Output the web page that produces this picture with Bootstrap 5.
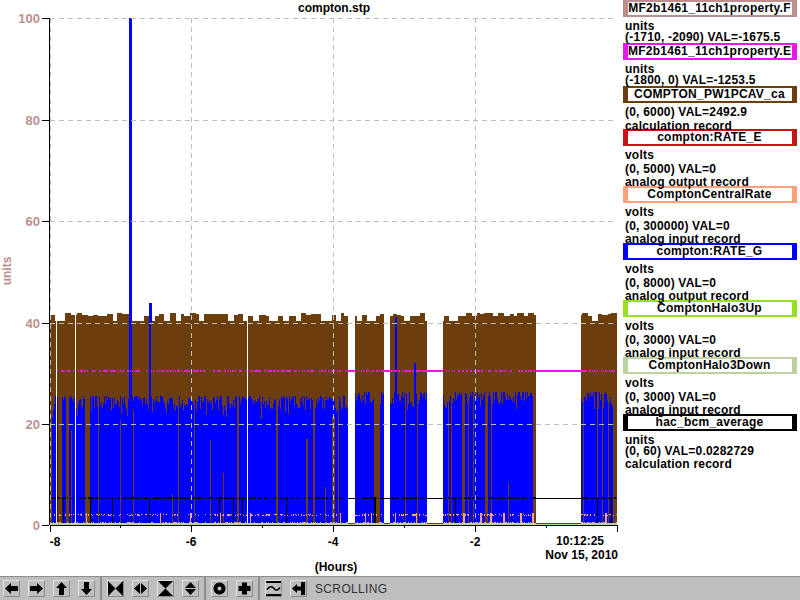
<!DOCTYPE html>
<html lang="en">
<head>
<meta charset="utf-8">
<title>compton.stp</title>
<link href="https://cdn.jsdelivr.net/npm/bootstrap@5.3.0/dist/css/bootstrap.min.css" rel="stylesheet">
<style>
html,body{height:600px;overflow:hidden;background:#fff}
body{font:bold 12px/14px "Liberation Sans",Arial,sans-serif;color:#000}
.strip-main{height:576px}
.plot-svg{width:620px;height:576px;display:block;flex:none}
.plot-svg text{font:bold 12px "Liberation Sans",Arial,sans-serif;fill:#000}
.plot-svg text.rosy{fill:#bc8f8f;font-size:13px}
.legend-pane{width:180px;flex:none;padding:0 3px 0 3px}
.lg-item{height:57px}
.lg-item.short{height:43px}
.lg-name{height:17px;border-style:solid;border-width:2px 5px;line-height:13px;text-align:center;white-space:nowrap;letter-spacing:.25px;padding-right:1px}
.lg-line{padding-left:2px;height:13.5px;line-height:14px;white-space:nowrap;letter-spacing:.2px}
.lg-line.tight{height:10.5px}
.lg-first{margin-top:2px}
.tool-strip{height:24px;background:#bebebe;border-top:1px solid #8e8e8e;font:12px/14px "Liberation Sans",Arial,sans-serif;color:#333}
.tool-btn{width:17px;height:17px;padding:0;margin-right:8px;background:#bebebe;border:1px solid;border-color:#e2e2e2 #8a8a8a #8a8a8a #e2e2e2;border-radius:0;display:flex;align-items:center;justify-content:center;flex:none}
.tool-btn svg{width:15px;height:15px;display:block}
.tool-group{padding:0 0 0 3px;height:100%;border-right:2px solid #8e8e8e;display:flex;align-items:center;width:104px;flex:none}
.tool-group.g1{width:102px}
.tool-group.g2{width:104px;padding-left:5px}
.tool-group.g3{width:54px;padding-left:5px}
.tool-group.g4{padding-left:5px;border:0;width:auto}
.tool-btn.last{margin-right:7px}
.mode-label{letter-spacing:.35px;margin-left:0}
.bl{fill:#000}
</style>
</head>
<body>
<div class="d-flex strip-main">
<svg class="plot-svg" id="plot" viewBox="0 0 620 576" shape-rendering="crispEdges">
<text x="334" y="12" text-anchor="middle">compton.stp</text>
<g id="data"></g>
<g stroke="#bebebe" stroke-width="1" stroke-dasharray="5 4" fill="none">
<path d="M50 18.5H617M50 120.5H617M50 221.5H617M50 323.5H617M50 424.5H617"/>
<path d="M50.5 18V525M191.5 18V525M333.5 18V525M475.5 18V525"/>
</g>
<g stroke="#000" fill="none">
<path d="M49.5 18V525"/>
<path d="M42 18.5H49M42 120.5H49M42 221.5H49M42 323.5H49M42 424.5H49M42 525.5H49"/>
<path d="M50 525.5H618M50.5 525V532M120.5 525V528M191.5 525V532M262.5 525V528M333.5 525V532M404.5 525V528M475.5 525V532M546.5 525V528M617.5 525V532"/>
</g>
<g text-anchor="end" class="ylab">
<text class="rosy" x="40" y="23">100</text>
<text class="rosy" x="40" y="125">80</text>
<text class="rosy" x="40" y="226">60</text>
<text class="rosy" x="40" y="328">40</text>
<text class="rosy" x="40" y="429">20</text>
<text class="rosy" x="40" y="530">0</text>
</g>
<text class="rosy" transform="translate(11 271) rotate(-90)" text-anchor="middle" style="font-size:12px">units</text>
<g text-anchor="middle">
<text x="55" y="546">-8</text>
<text x="191" y="546">-6</text>
<text x="333" y="546">-4</text>
<text x="475" y="546">-2</text>
<text x="336" y="571">(Hours)</text>
</g>
<g text-anchor="end">
<text x="604" y="545">10:12:25</text>
<text x="618" y="559">Nov 15, 2010</text>
</g>
</svg>
<div class="legend-pane" id="legend">
<div class="lg-item short"><div class="lg-name" style="border-color:#bc8f8f">MF2b1461_11ch1property.F</div><div class="lg-line tight lg-first">units</div><div class="lg-line">(-1710, -2090) VAL=-1675.5</div></div>
<div class="lg-item short"><div class="lg-name" style="border-color:#e619e6">MF2b1461_11ch1property.E</div><div class="lg-line tight lg-first">units</div><div class="lg-line">(-1800, 0) VAL=-1253.5</div></div>
<div class="lg-item short"><div class="lg-name" style="border-color:#6b3e0c">COMPTON_PW1PCAV_ca</div><div class="lg-line lg-first">(0, 6000) VAL=2492.9</div><div class="lg-line">calculation record</div></div>
<div class="lg-item"><div class="lg-name" style="border-color:#c81414">compton:RATE_E</div><div class="lg-line lg-first">volts</div><div class="lg-line">(0, 5000) VAL=0</div><div class="lg-line">analog output record</div></div>
<div class="lg-item"><div class="lg-name" style="border-color:#ffa07a">ComptonCentralRate</div><div class="lg-line lg-first">volts</div><div class="lg-line">(0, 300000) VAL=0</div><div class="lg-line">analog input record</div></div>
<div class="lg-item"><div class="lg-name" style="border-color:#0000ff">compton:RATE_G</div><div class="lg-line lg-first">volts</div><div class="lg-line">(0, 8000) VAL=0</div><div class="lg-line">analog output record</div></div>
<div class="lg-item"><div class="lg-name" style="border-color:#98e01a">ComptonHalo3Up</div><div class="lg-line lg-first">volts</div><div class="lg-line">(0, 3000) VAL=0</div><div class="lg-line">analog input record</div></div>
<div class="lg-item"><div class="lg-name" style="border-color:#bcd3a0">ComptonHalo3Down</div><div class="lg-line lg-first">volts</div><div class="lg-line">(0, 3000) VAL=0</div><div class="lg-line">analog input record</div></div>
<div class="lg-item"><div class="lg-name" style="border-color:#000">hac_bcm_average</div><div class="lg-line tight lg-first">units</div><div class="lg-line">(0, 60) VAL=0.0282729</div><div class="lg-line">calculation record</div></div>
</div>
</div>
<div class="tool-strip d-flex align-items-center">
<div class="tool-group g1">
<button class="tool-btn btn" type="button" aria-label="left"><svg viewBox="0 0 15 15"><path class="bl" d="M1 7.5 7 2V5H14V10H7V13Z"/></svg></button>
<button class="tool-btn btn" type="button" aria-label="right"><svg viewBox="0 0 15 15"><path class="bl" d="M14 7.5 8 2V5H1V10H8V13Z"/></svg></button>
<button class="tool-btn btn" type="button" aria-label="up"><svg viewBox="0 0 15 15"><path class="bl" d="M7.5 1 13 7H10V14H5V7H2Z"/></svg></button>
<button class="tool-btn btn" type="button" aria-label="down"><svg viewBox="0 0 15 15"><path class="bl" d="M7.5 14 13 8H10V1H5V8H2Z"/></svg></button>
</div>
<div class="tool-group g2">
<button class="tool-btn btn" type="button" aria-label="zoom in x"><svg viewBox="0 0 15 15"><path class="bl" d="M0 0 7.5 7.5 15 0V15L7.5 7.5 0 15Z"/></svg></button>
<button class="tool-btn btn" type="button" aria-label="zoom out x"><svg viewBox="0 0 15 15"><path class="bl" d="M7 2V13L1 7.5ZM8 2V13L14 7.5Z"/></svg></button>
<button class="tool-btn btn" type="button" aria-label="zoom in y"><svg viewBox="0 0 15 15"><path class="bl" d="M0 0H15L7.5 7.5 15 15H0L7.5 7.5Z"/></svg></button>
<button class="tool-btn btn" type="button" aria-label="zoom out y"><svg viewBox="0 0 15 15"><path class="bl" d="M2 7 7.5 1 13 7ZM2 8 7.5 14 13 8Z"/></svg></button>
</div>
<div class="tool-group g3">
<button class="tool-btn btn" type="button" aria-label="autoscale"><svg viewBox="0 0 15 15"><path class="bl" fill-rule="evenodd" d="M7.5 1.5a6 6 0 1 0 .01 0ZM7.5 5.5a2 2 0 1 1-.01 0Z"/></svg></button>
<button class="tool-btn btn last" type="button" aria-label="reset"><svg viewBox="0 0 15 15"><path class="bl" d="M5 1.5H10V5H13.5V10H10V13.5H5V10H1.5V5H5Z"/></svg></button>
</div>
<div class="tool-group g4">
<button class="tool-btn btn" type="button" aria-label="graph"><svg viewBox="0 0 15 15"><path class="bl" d="M0 0H15V2H0ZM0 13H15V15H0Z"/><path d="M1 8.5C4 5 6 5 8 7.5S12 9.5 14 6.5" fill="none" stroke="#000" stroke-width="1.4" shape-rendering="auto"/></svg></button>
<button class="tool-btn btn" type="button" aria-label="back"><svg viewBox="0 0 15 15"><path class="bl" d="M1 7.5 6 3V5.5H10V1H14V14H10V9.5H6V12Z"/></svg></button>
<span class="mode-label">SCROLLING</span>
</div>
</div>
<script>
(function(){
var s=12345;function r(){s=(s*1103515245+12345)&0x7fffffff;return s/0x7fffffff;}
var segs=[[50,348],[355,384],[390,427],[443,536],[581,617]];
var brown='',blue='',orange='',black='',mag='',pale='';
function col(x,y1,y2){return 'M'+x+' '+y1+'V'+y2;}
var bspk={58:1,59:1,60:1,61:1,66:1,67:1,68:1,71:1,85:1,86:1,87:1,88:1,89:1,98:1,120:1,133:1,172:1,178:1,194:1,210:1,223:1,237:1,238:1,276:1,277:1,306:1,307:1,313:1,314:1,325:1,332:1,333:1,334:1,338:1,374:1,375:1,376:1,377:1,378:1,379:1,384:1,405:1,417:1,448:1,451:1,462:1,463:1,464:1,468:1,473:1,485:1,486:1,487:1,491:1,508:1,533:1,534:1,535:1,583:1,597:1,602:1,608:1,613:1,614:1,615:1,616:1};
var btop={172:494,210:440,223:473,306:439,307:439,325:487,332:417,333:417,334:417,152:433,508:483,71:430,133:410,120:420};
var white={56:1,75:1,247:1};
var oc={};[75,86,160,190,220,250,340,365,371,389,395,416,432,463,464,480,481,490,491,503,504,520,521,532,533,605,606].forEach(function(v){oc[v]=1;});
var blk={63:1,90:1,112:1,149:1,219:1,233:1,242:1,286:1,374:1,375:1,455:1,597:1,611:1};
var tooth=0,tv=314;
segs.forEach(function(g,gi){
 for(var x=g[0];x<g[1];x++){
  if(white[x])continue;
  if(tooth--<=0){tooth=2+Math.floor(r()*4);tv=r()<.28?321:(313+Math.floor(r()*4));}
  brown+=col(x,tv,525);
  var t=(gi==0?396:392)+Math.floor(r()*r()*18)+ (r()<.15?8:0);
  if(gi==0&&x<52)t=525;
  if(x==395)t=317;if(x==396)t=317;if(x==414||x==415)t=363;if(x==129||x==130||x==131)t=18;if(x==149||x==150)t=303;
  if(x==535||x==534||x==616)t=525;
  if(bspk[x]){ if(btop[x]) blue+=col(x,t,btop[x]); }
  else blue+=col(x,t,525);
  if(r()<.55&&x>52) orange+=col(x,514+Math.floor(r()*2),515+Math.floor(r()*2));
  if(r()<.35&&x>52) orange+=col(x,522,525);
  if(oc[x]) orange+=col(x,513,525);
  if(r()<.7) black+=col(x,497+Math.floor(r()*2),499);
  if(blk[x]) black+=col(x,498,525);
  if(r()<.55&&x>55) mag+=col(x,370,372);
 }
});
var html='';
html+='<path d="'+brown+'" stroke="#6b3e0c" fill="none"/>';
html+='<path d="M129 18H132V323H129ZM149 303H151.5V323H149Z" fill="#0000ff"/>';
html+='<path d="'+blue+'" stroke="#0000ff" fill="none"/>';
html+='<path d="'+mag+'" stroke="#e619e6" fill="none"/>';
html+='<path d="'+orange+'" stroke="#ffa07a" fill="none"/>';
html+='<path d="'+black+'" stroke="#000" fill="none"/>';
html+='<rect x="50" y="523" width="567" height="2" fill="#bcd3a0"/>';
html+='<path d="M348 371H355M384 371H390M427 371H443M536 371H581" stroke="#e619e6" stroke-width="2" fill="none"/>';
html+='<path d="M348 498.5H355M384 498.5H390M427 498.5H443M536 498.5H581" stroke="#000" stroke-width="1.5" fill="none"/>';
html+='<path d="M348 523.5H355M384 523.5H390M427 523.5H443M536 523.5H581" stroke="#6b3e0c" fill="none"/>';
document.getElementById('data').innerHTML=html;
})();
</script>
<script src="https://cdn.jsdelivr.net/npm/bootstrap@5.3.0/dist/js/bootstrap.bundle.min.js"></script>
</body>
</html>
